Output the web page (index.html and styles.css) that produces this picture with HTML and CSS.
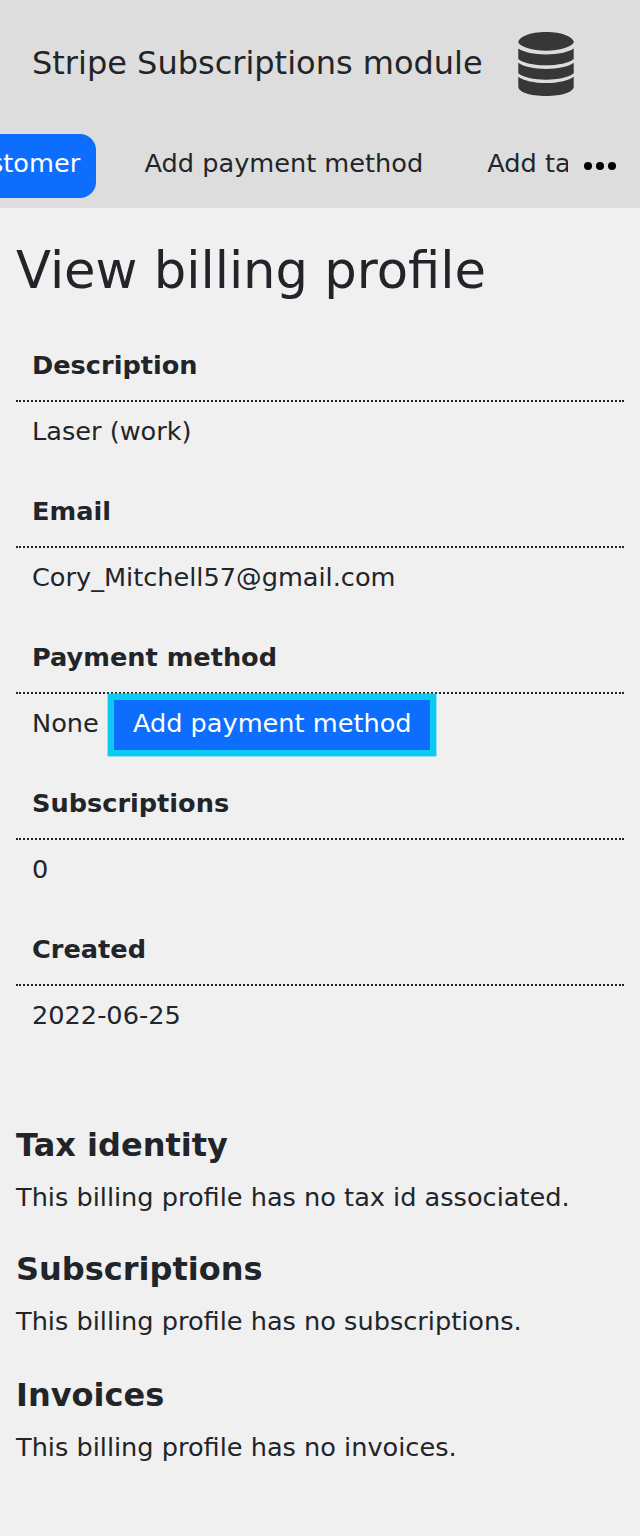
FILE: index.html
```
<!DOCTYPE html>
<html lang="en">
<head>
<meta charset="utf-8">
<title>View billing profile</title>
<link rel="stylesheet" href="styles.css">
</head>
<body>
<header class="header">
  <div class="brand">
    <h1 class="brand-title">Stripe Subscriptions module</h1>
    <svg class="brand-icon" viewBox="0 0 56 64" fill="#373737"><path d="M.3 10.500C.3 5 12 0 28 0s27.700 5 27.700 10.500C53 15 42 18.700 28 18.700S3 15 .3 10.500z"/><path d="M.3 16.500C6 20.500 16 22.400 28 22.400s22-1.900 27.700-5.900V27C51 31 40 33.300 28 33.300S5 31 .3 27z"/><path d="M.3 30.700C6 34.700 16 36.900 28 36.900s22-2.200 27.700-6.200v10.600C51 45.300 40 47.700 28 47.700S5 45.300.3 41.300z"/><path d="M.3 44.700C6 48.700 16 51 28 51s22-2.300 27.700-6.300v9.800C55.700 60 44 64 28 64S.3 60 .3 54.500z"/></svg>
  </div>
  <nav class="nav">
    <div class="nav-items">
      <a class="nav-link nav-active">Customer</a>
      <a class="nav-link">Add payment method</a>
      <a class="nav-link">Add tax ID</a>
    </div>
    <svg class="more" viewBox="0 0 32 8"><circle cx="4" cy="4" r="4"/><circle cx="16" cy="4" r="4"/><circle cx="28" cy="4" r="4"/></svg>
  </nav>
</header>
<main class="content">
  <h2 class="title">View billing profile</h2>
  <dl class="details">
    <dt class="label">Description</dt><dd class="value">Laser (work)</dd>
    <dt class="label">Email</dt><dd class="value">Cory_Mitchell57@gmail.com</dd>
    <dt class="label">Payment method</dt><dd class="value value-action">None <a class="button">Add payment method</a></dd>
    <dt class="label">Subscriptions</dt><dd class="value">0</dd>
    <dt class="label">Created</dt><dd class="value">2022-06-25</dd>
  </dl>
  <section class="section"><h3 class="section-title">Tax identity</h3><p class="text">This billing profile has no tax id associated.</p></section>
  <section class="section"><h3 class="section-title">Subscriptions</h3><p class="text">This billing profile has no subscriptions.</p></section>
  <section class="section section-last"><h3 class="section-title">Invoices</h3><p class="text">This billing profile has no invoices.</p></section>
</main>
</body>
</html>
```
FILE: styles.css
```
* { box-sizing: border-box; }
body { margin: 0; min-height: 1536px; background: #f0f0f0; color: #212529; font: 25.6px/36px "DejaVu Sans", sans-serif; }
h1, h2, h3, p, dl, dd { margin: 0; }
.header { height: 208px; background: #ddd; }
.brand { display: flex; justify-content: space-between; align-items: center; height: 128px; padding: 0 66px 0 32px; }
.brand-title { padding-bottom: 2px; font-size: 32px; font-weight: 400; white-space: nowrap; }
.brand-icon { width: 56px; height: 64px; }
.nav { display: flex; align-items: flex-start; padding-top: 6px; }
.nav-items { display: flex; justify-content: flex-end; gap: 16px; width: 568px; overflow: hidden; }
.nav-link { flex: none; height: 64px; padding: 11px 16px; border-radius: 16px; line-height: 36px; white-space: nowrap; }
.nav-link:nth-child(2) { margin-left: 16.3px; }
.nav-link:nth-child(3) { width: 96.800px; margin-left: 16px; padding-right: 0; overflow: hidden; border-radius: 0; }
.nav-active { background: #0d6efd; color: #fff; }
.more { width: 32px; height: 8px; margin: 28px 0 0 16px; }
.content { padding: 0 16px; }
.title { height: 124px; padding-top: 32px; font-size: 51.2px; font-weight: 400; line-height: 60px; white-space: nowrap; }
.details { height: 780px; }
.label { height: 70px; padding: 15px 16px 0; border-bottom: 2px dotted #212529; font-weight: 700; }
.value { height: 76px; padding: 11px 16px; white-space: nowrap; }
.value-action { display: flex; align-items: flex-start; gap: 15.5px; }
.button { height: 50px; width: 316px; margin-top: -5px; padding: 5px 0 0 18.600px; background: #0d6efd; box-shadow: 0 0 0 6.4px #0dcaf0; color: #fff; }
.section { height: 124px; padding-top: 13px; }
.section-title { font-size: 32px; line-height: 40px; }
.text { margin-top: 14px; }
.section-last { padding-top: 15px; }
```
